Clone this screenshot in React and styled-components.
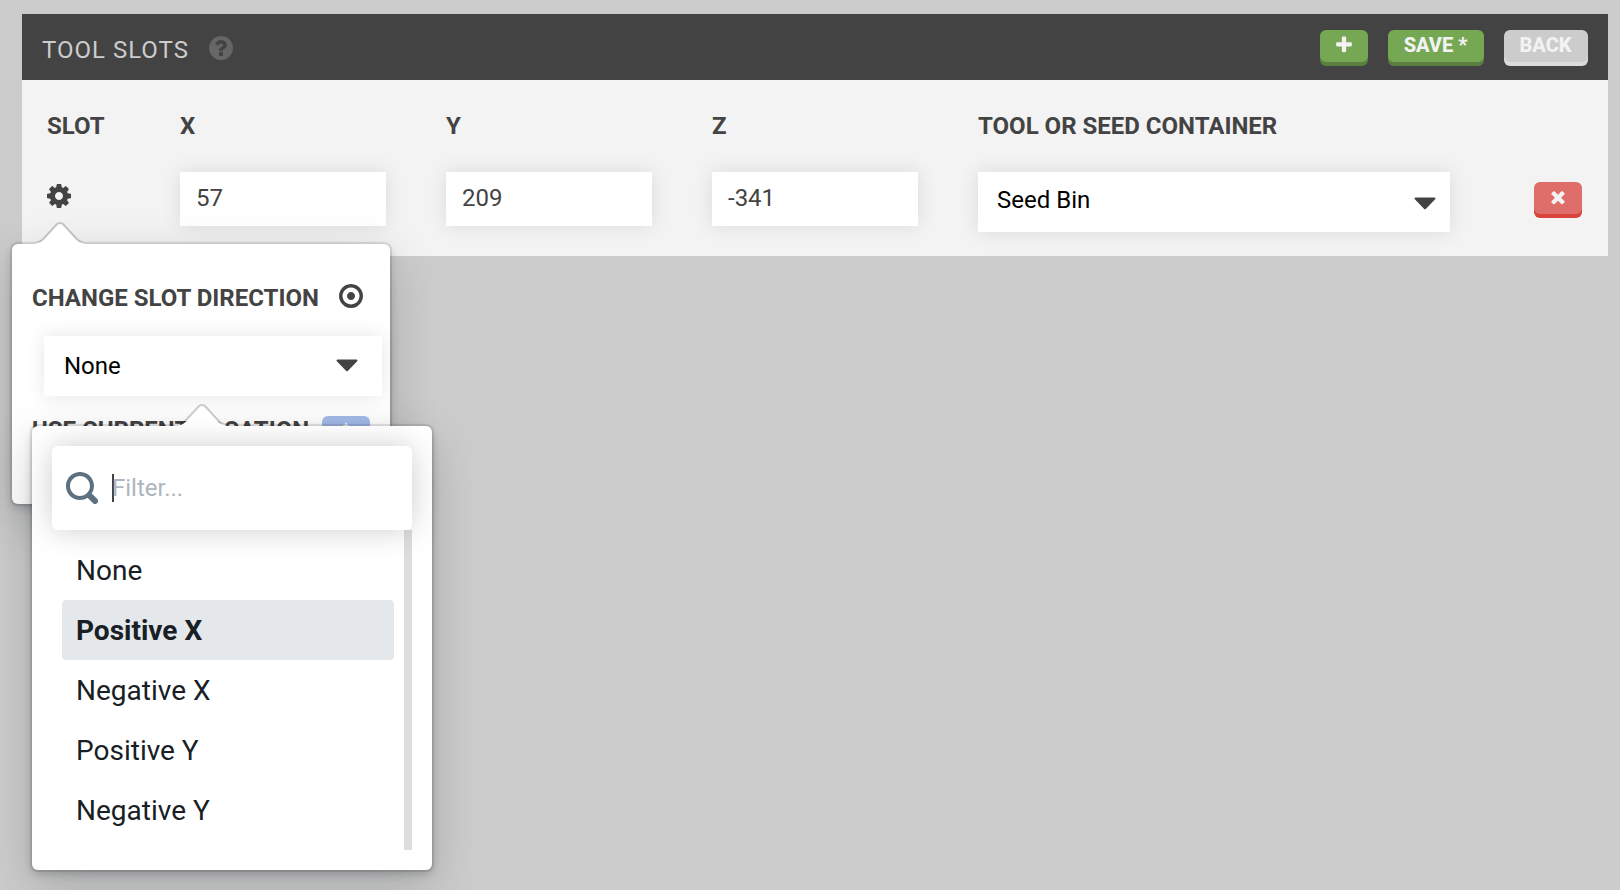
import React from "react";
import styled, { createGlobalStyle } from "styled-components";

const GlobalStyle = createGlobalStyle`
  *, *::before, *::after { box-sizing: border-box; }
  html, body { height: 100%; }
  body {
    margin: 0;
    background: #cccccc;
    color: #434343;
    font-family: Roboto, "Liberation Sans", sans-serif;
    font-size: 24px;
    line-height: 28px;
    overflow: hidden;
  }
  input, button { font: inherit; }
`;

const Page = styled.main`
  padding: 14px 12px 0 22px;
  height: 890px;
`;

const Header = styled.header`
  display: flex;
  align-items: flex-start;
  height: 66px;
  padding: 16px 20px 0;
  background: #434343;
`;

const Title = styled.h3`
  width: 147px;
  margin: 6px 18px 0 0;
  color: #cccccc;
  font-size: 24px;
  font-weight: 400;
  line-height: 28px;
  letter-spacing: 1px;
  text-transform: uppercase;
  white-space: nowrap;
`;

const HelpIcon = styled.span`
  display: flex;
  margin-top: 4px;
  color: #666666;
`;

const Actions = styled.div`
  display: flex;
  gap: 20px;
  margin-left: auto;
`;

const tones = {
  green: ["#76a854", "#5a7f40"],
  gray: ["#cccccc", "#dcdcdc"],
  red: ["#df6e6a", "#d9433c"],
  blue: ["#a3bbe8", "#7f9bd0"],
};

const Button = styled.button`
  display: flex;
  justify-content: center;
  width: ${(p) => p.$width || 48}px;
  height: 32px;
  margin: 0 0 4px;
  padding: ${(p) => p.$top || 0}px 1px 0 0;
  border: 0;
  border-radius: 6px;
  background: ${(p) => tones[p.$tone][0]};
  box-shadow: 0 4px 0 0 ${(p) => tones[p.$tone][1]};
  color: #f3f3f3;
  font-size: 20px;
  font-weight: 800;
  line-height: 30px;
  text-transform: uppercase;
`;

const Body = styled.section`
  display: grid;
  grid-template-columns: 133px 266px 266px 266px 556px 48px;
  grid-template-rows: 92px 84px;
  height: 176px;
  padding-left: 25px;
  background: #f3f3f3;
`;

const Label = styled.label`
  font-size: 24px;
  font-weight: 700;
  line-height: 28px;
  text-transform: uppercase;
  white-space: nowrap;
`;

const ColumnLabel = styled(Label)`
  padding-top: 32px;
`;

const GearCell = styled.div`
  padding-top: 12px;
  position: relative;
`;

const GearIcon = styled.span`
  display: flex;
  margin: -2px 0 0 -2px;
`;

const NumberInput = styled.input`
  width: 206px;
  height: 54px;
  padding: 0 16px 3px;
  border: 0;
  border-radius: 0;
  outline: 0;
  background: #ffffff;
  box-shadow: 0 0 20px rgba(0, 0, 0, 0.1);
  color: #434343;
  font-size: 24px;
`;

const Select = styled.div`
  display: flex;
  align-items: center;
  justify-content: space-between;
  width: ${(p) => p.$width}px;
  height: 60px;
  padding: 0 ${(p) => p.$right}px 0 ${(p) => p.$left || 20}px;
  background: #ffffff;
  box-shadow: 0 0 20px rgba(0, 0, 0, 0.1);
  color: #000000;
  svg { margin-top: ${(p) => p.$caretTop || 0}px; }
`;

const SelectText = styled.span`
  padding-bottom: ${(p) => p.$lift || 0}px;
`;

const RemoveCell = styled.div`
  padding-top: 10px;
`;

const Popover = styled.div`
  position: absolute;
  border-radius: 6px;
  background: #ffffff;
  box-shadow: 0 0 0 2px rgba(16, 22, 26, 0.1), 0 4px 8px rgba(16, 22, 26, 0.2),
    0 16px 48px rgba(16, 22, 26, 0.2);
`;

const DirectionPopover = styled(Popover)`
  left: -35px;
  top: 72px;
  width: 378px;
  height: 260px;
  padding: 38px 8px 0 20px;
`;

const OptionsPopover = styled(Popover)`
  left: 20px;
  top: 182px;
  width: 400px;
  height: 444px;
  padding: 20px;
`;

const ArrowSvg = styled.svg`
  position: absolute;
  top: -22px;
  left: ${(p) => p.$left}px;
  width: 60px;
  height: 60px;
  transform: rotate(90deg);
  pointer-events: none;
`;

const PopoverRow = styled.div`
  display: flex;
  align-items: flex-start;
`;

const DirectionRow = styled(PopoverRow)`
  height: 28px;
  label { padding-top: 2px; }
`;

const DirectionIcon = styled.span`
  display: flex;
  margin: 0 0 0 18px;
`;

const SelectSlot = styled.div`
  padding: 26px 0 20px 12px;
`;

const LocationRow = styled(PopoverRow)`
  width: 338px;
  justify-content: space-between;
`;

const FilterBox = styled.div`
  position: relative;
  display: flex;
  align-items: center;
  height: 84px;
  padding-left: 14px;
  border-radius: 6px;
  background: #ffffff;
  box-shadow: 0 0 30px rgba(0, 0, 0, 0.2);
  z-index: 1;
`;

const TextCaret = styled.span`
  width: 2px;
  height: 28px;
  margin-left: 14px;
  background: #434343;
`;

const FilterHint = styled.span`
  margin-left: -2px;
  color: #adb6be;
`;

const Options = styled.div`
  display: flex;
  height: 320px;
`;

const OptionList = styled.ul`
  width: 332px;
  margin: 10px 10px 0;
  padding: 0;
  list-style: none;
`;

const Option = styled.li`
  height: 60px;
  padding: 1px 14px 0;
  border-radius: 4px;
  background: ${(p) => (p.$active ? "#e4e8eb" : "transparent")};
  color: #182026;
  font-size: 28px;
  font-weight: ${(p) => (p.$active ? 700 : 400)};
  line-height: 60px;
`;

const ScrollTrack = styled.div`
  width: 8px;
  background: #dddddd;
`;

const ring = "q0 209-103 385.5t-279.5 279.5-385.5 103-385.5-103-279.5-279.5-103-385.5 103-385.5 279.5-279.5 385.5-103 385.5 103 279.5 279.5 103 385.5z";

const glyphs = {
  gear: "M1152 896q0-106-75-181t-181-75-181 75-75 181 75 181 181 75 181-75 75-181zm512-109v222q0 12-8 23t-20 13l-185 28q-19 54-39 91 35 50 107 138 10 12 10 25t-9 23q-27 37-99 108t-94 71q-12 0-26-9l-138-108q-44 23-91 38-16 136-29 186-7 28-36 28h-222q-14 0-24.5-8.5t-11.5-21.5l-28-184q-49-16-90-37l-141 107q-10 9-25 9-14 0-25-11-126-114-165-168-7-10-7-23 0-12 8-23 15-21 51-66.5t54-70.5q-27-50-41-99l-183-27q-13-2-21-12.5t-8-23.5v-222q0-12 8-23t19-13l186-28q14-46 39-92-40-57-107-138-10-12-10-24 0-10 9-23 26-36 98.5-107.5t94.5-71.5q13 0 26 10l138 107q44-23 91-38 16-136 29-186 7-28 36-28h222q14 0 24.5 8.5t11.5 21.5l28 184q49 16 90 37l142-107q9-9 24-9 13 0 25 10 129 119 165 170 7 8 7 22 0 12-8 23-15 21-51 66.5t-54 70.5q26 50 41 98l183 28q13 2 21 12.5t8 23.5z",
  help: "M1024 1376v-192q0-14-9-23t-23-9h-192q-14 0-23 9t-9 23v192q0 14 9 23t23 9h192q14 0 23-9t9-23zm256-672q0-88-55.5-163t-138.5-116-170-41q-243 0-371 213-15 24 8 42l132 100q7 6 19 6 16 0 25-12 53-68 86-92 34-24 86-24 48 0 85.5 26t37.5 59q0 38-20 61t-68 45q-63 28-115.5 86.5t-52.5 125.5v36q0 14 9 23t23 9h192q14 0 23-9t9-23q0-19 21.5-49.5t54.5-49.5q32-18 49-28.5t46-35 44.5-48 28-60.5 12.5-81zm384 192" + ring,
  target: "M1152 896q0 106-75 181t-181 75-181-75-75-181 75-181 181-75 181 75 75 181zm-256-544q-148 0-273 73t-198 198-73 273 73 273 198 198 273 73 273-73 198-198 73-273-73-273-198-198-273-73zm768 544" + ring,
  times: "M1490 1322q0 40-28 68l-136 136q-28 28-68 28t-68-28l-294-294-294 294q-28 28-68 28t-68-28l-136-136q-28-28-28-68t28-68l294-294-294-294q-28-28-28-68t28-68l136-136q28-28 68-28t68 28l294 294 294-294q28-28 68-28t68 28l136 136q28 28 28 68t-28 68l-294 294 294 294q28 28 28 68z",
  plus: "M1600 736v192q0 40-28 68t-68 28h-416v416q0 40-28 68t-68 28h-192q-40 0-68-28t-28-68v-416h-416q-40 0-68-28t-28-68v-192q0-40 28-68t68-28h416v-416q0-40 28-68t68-28h192q40 0 68 28t28 68v416h416q40 0 68 28t28 68z",
};

const Glyph = ({ name, size = 28 }) => (
  <svg width={size} height={size} viewBox="0 0 1792 1792" fill="currentColor">
    <path d={glyphs[name]} />
  </svg>
);

const Caret = () => (
  <svg width="22" height="13" viewBox="0 0 22 13" fill="#434343">
    <path d="M1.6 0.4H20.4Q22 0.4 21.4 1.9L12 11.8Q11 12.8 10 11.8L0.6 1.9Q0 0.4 1.6 0.4Z" />
  </svg>
);

const SearchIcon = () => (
  <svg width="32" height="32" viewBox="0 0 16 16" fill="#5c7080">
    <path d="M15.55 13.43l-2.67-2.68a6.94 6.94 0 0 0 1.11-3.76c0-3.87-3.13-7-7-7s-7 3.13-7 7 3.13 7 7 7c1.39 0 2.68-.42 3.76-1.11l2.68 2.67a1.498 1.498 0 1 0 2.12-2.12zm-8.56-1.44c-2.76 0-5-2.24-5-5s2.24-5 5-5 5 2.24 5 5-2.24 5-5 5z" />
  </svg>
);

const MoveIcon = () => (
  <svg width="20" height="20" viewBox="0 0 20 20" fill="currentColor">
    <path d="M9 1.2Q10 0 11 1.2V3H13V5.2H11V9H18.8V11H11V18.8H9V11H1.2V9H9V5.2H7V3H9z" />
  </svg>
);

const PopoverArrow = ({ left }) => (
  <ArrowSvg $left={left} viewBox="0 0 30 30">
    <path
      fill="#10161a"
      fillOpacity="0.2"
      d="M8.11 6.302c1.015-.936 1.887-2.922 1.887-4.297v26c0-1.378-.868-3.357-1.888-4.297L.925 17.09c-1.237-1.14-1.233-3.034 0-4.17L8.11 6.302z"
    />
    <path
      fill="#ffffff"
      d="M8.787 7.036c1.22-1.125 2.21-3.376 2.21-5.03V0v30-2.005c0-1.654-.983-3.9-2.21-5.03l-7.183-6.616c-.81-.746-.802-1.96 0-2.7l7.183-6.614z"
    />
  </ArrowSvg>
);

const directions = ["None", "Positive X", "Negative X", "Positive Y", "Negative Y"];

const DirectionOptions = () => (
  <OptionsPopover>
    <PopoverArrow left={140} />
    <FilterBox>
      <SearchIcon />
      <TextCaret />
      <FilterHint>Filter...</FilterHint>
    </FilterBox>
    <Options>
      <OptionList>
        {directions.map((name) => (
          <Option key={name} $active={name === "Positive X"}>
            {name}
          </Option>
        ))}
      </OptionList>
      <ScrollTrack />
    </Options>
  </OptionsPopover>
);

const SlotMenu = () => (
  <DirectionPopover>
    <PopoverArrow left={18} />
    <DirectionRow>
      <Label>Change slot direction</Label>
      <DirectionIcon>
        <Glyph name="target" />
      </DirectionIcon>
    </DirectionRow>
    <SelectSlot>
      <Select $width={338} $right={24} $caretTop={-2}>
        <SelectText>None</SelectText>
        <Caret />
      </Select>
    </SelectSlot>
    <LocationRow>
      <Label>Use current location</Label>
      <Button $tone="blue" $top={6}>
        <MoveIcon />
      </Button>
    </LocationRow>
    <DirectionOptions />
  </DirectionPopover>
);

export default function App() {
  return (
    <>
      <GlobalStyle />
      <Page>
        <Header>
          <Title>Tool Slots</Title>
          <HelpIcon>
            <Glyph name="help" />
          </HelpIcon>
          <Actions>
            <Button $tone="green" $top={5}>
              <Glyph name="plus" size={20} />
            </Button>
            <Button $tone="green" $width={96}>Save *</Button>
            <Button $tone="gray" $width={84}>Back</Button>
          </Actions>
        </Header>
        <Body>
          <ColumnLabel>Slot</ColumnLabel>
          <ColumnLabel>X</ColumnLabel>
          <ColumnLabel>Y</ColumnLabel>
          <ColumnLabel>Z</ColumnLabel>
          <ColumnLabel>Tool or seed container</ColumnLabel>
          <span />
          <GearCell>
            <GearIcon>
              <Glyph name="gear" />
            </GearIcon>
            <SlotMenu />
          </GearCell>
          <div><NumberInput defaultValue="57" /></div>
          <div><NumberInput defaultValue="209" /></div>
          <div><NumberInput defaultValue="-341" /></div>
          <Select $width={472} $left={19} $right={14} $caretTop={3}>
            <SelectText $lift={4}>Seed Bin</SelectText>
            <Caret />
          </Select>
          <RemoveCell>
            <Button $tone="red" $top={5}>
              <Glyph name="times" size={20} />
            </Button>
          </RemoveCell>
        </Body>
      </Page>
    </>
  );
}
